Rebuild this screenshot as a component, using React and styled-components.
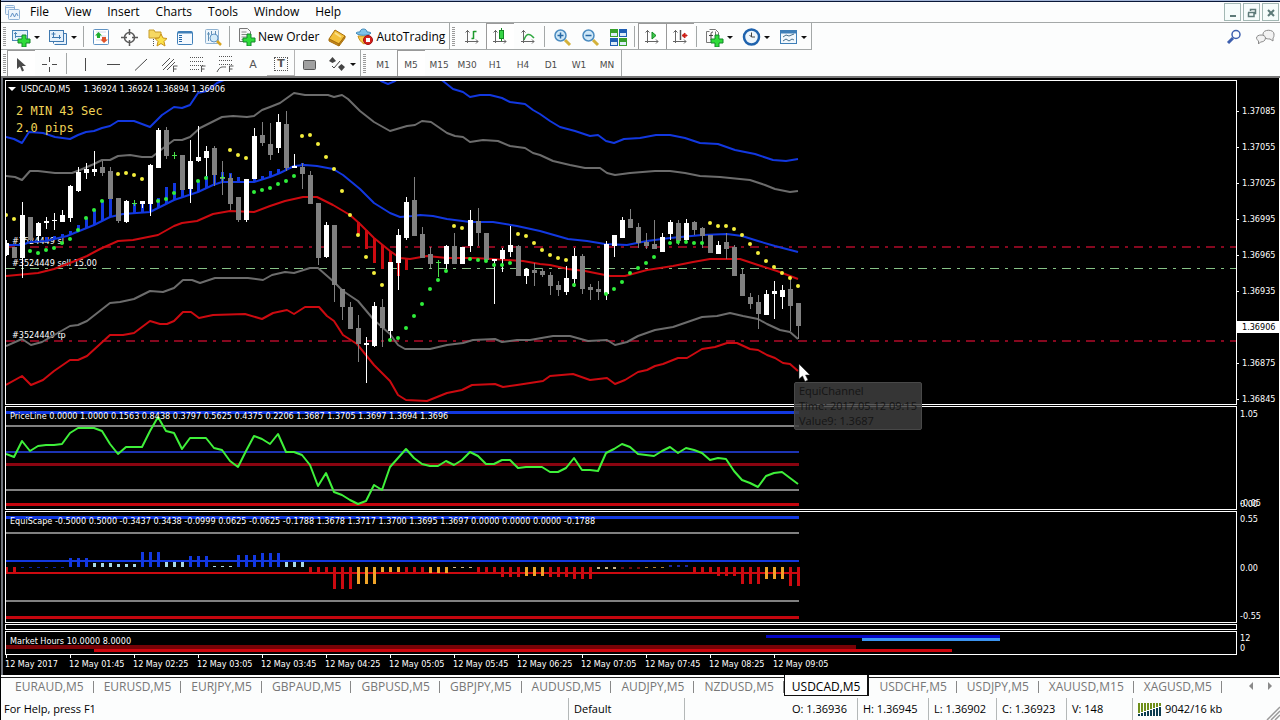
import styled, { createGlobalStyle, css } from "styled-components";

const STEP = 8;
const barX = (i) => 6 + i * STEP;

const BLUE = "#1238e0";
const RED = "#cc0a10";
const GRAY = "#6c6c6c";

// [index, high, open/close top, open/close bottom, low, up]
const candles = [
  [0, 240, 243, 255, 256, 1], [1, 247, 247, 258, 258, 0], [2, 202, 215, 258, 278, 1], [3, 217, 217, 240, 241, 0],
  [4, 222, 223, 236, 241, 1], [5, 217, 221, 223, 229, 1], [6, 213, 220, 221, 230, 1], [7, 210, 215, 222, 222, 1],
  [8, 185, 186, 218, 222, 1], [9, 167, 172, 191, 192, 1], [10, 163, 169, 173, 179, 1], [11, 151, 169, 172, 176, 1],
  [12, 161, 167, 173, 176, 0], [13, 167, 171, 199, 199, 0], [14, 198, 198, 221, 223, 0], [15, 200, 201, 222, 223, 1],
  [17, 201, 201, 204, 208, 1], [18, 164, 165, 204, 216, 1], [19, 128, 130, 168, 168, 1], [20, 127, 130, 156, 159, 0],
  [22, 155, 155, 190, 190, 0], [23, 140, 161, 189, 203, 1], [24, 126, 157, 161, 162, 1], [25, 146, 151, 158, 176, 1],
  [26, 146, 148, 175, 186, 0], [27, 161, 177, 179, 195, 0], [28, 174, 178, 204, 210, 0], [29, 197, 197, 220, 222, 0],
  [30, 179, 179, 220, 222, 1], [31, 128, 136, 179, 179, 1], [32, 122, 135, 143, 146, 0], [33, 123, 144, 155, 160, 0],
  [34, 114, 122, 148, 153, 1], [35, 111, 124, 168, 171, 0], [36, 154, 166, 168, 168, 1], [37, 163, 167, 174, 189, 0],
  [38, 171, 175, 204, 204, 0], [39, 203, 203, 258, 265, 0], [40, 222, 225, 257, 258, 1], [41, 225, 225, 285, 302, 0],
  [42, 289, 289, 307, 320, 0], [43, 302, 307, 329, 329, 0], [44, 315, 328, 344, 362, 0], [45, 337, 343, 345, 383, 1],
  [46, 302, 306, 346, 347, 1], [47, 299, 307, 328, 347, 0], [48, 262, 262, 331, 340, 1], [49, 229, 235, 263, 290, 1],
  [50, 197, 202, 238, 240, 1], [51, 177, 200, 236, 236, 0], [52, 227, 234, 258, 258, 0], [53, 247, 254, 264, 268, 0],
  [55, 245, 246, 264, 269, 1], [56, 233, 246, 264, 264, 0], [57, 247, 247, 264, 264, 1], [58, 210, 220, 246, 252, 1],
  [59, 208, 221, 233, 246, 0], [60, 233, 233, 260, 260, 0], [61, 259, 259, 261, 304, 1], [62, 248, 250, 259, 272, 1],
  [63, 226, 245, 252, 257, 1], [64, 245, 246, 276, 276, 0], [65, 268, 269, 276, 284, 1], [66, 263, 270, 273, 286, 0],
  [67, 268, 271, 275, 277, 0], [68, 272, 275, 286, 295, 0], [69, 281, 285, 290, 296, 0], [70, 266, 278, 292, 295, 1],
  [71, 248, 256, 279, 287, 1], [72, 254, 256, 289, 294, 0], [73, 284, 287, 290, 300, 0], [74, 281, 289, 292, 300, 0],
  [75, 241, 244, 294, 300, 1], [76, 235, 235, 246, 257, 1], [77, 217, 220, 238, 238, 1], [78, 209, 219, 228, 228, 0],
  [79, 223, 227, 243, 248, 0], [80, 233, 242, 246, 249, 0], [81, 220, 244, 249, 249, 0], [82, 233, 237, 252, 252, 1],
  [83, 220, 222, 234, 240, 1], [84, 220, 223, 241, 245, 0], [85, 219, 223, 240, 241, 1], [86, 221, 222, 230, 235, 0],
  [87, 227, 228, 236, 248, 0], [88, 235, 235, 253, 253, 0], [89, 241, 245, 254, 254, 1], [90, 233, 242, 249, 259, 0],
  [91, 245, 247, 276, 276, 0], [92, 269, 274, 296, 296, 0], [93, 293, 297, 304, 309, 0], [94, 295, 302, 314, 329, 0],
  [95, 290, 294, 315, 315, 1], [96, 281, 291, 294, 319, 1], [97, 285, 290, 297, 309, 1], [98, 279, 289, 306, 331, 0],
  [99, 303, 303, 326, 339, 0],
];

// [index, level, top, bottom]
const dojis = [[16, 203, 200, 206], [21, 155, 152, 159], [27, 177, 175, 180], [54, 262, 260, 277]];

const upperBlue = [
  [6, 137], [14, 139], [22, 143], [29, 132], [43, 133], [55, 137], [70, 139], [78, 135], [86, 132], [94, 131],
  [102, 128], [110, 126], [118, 121], [134, 121], [142, 124], [150, 127], [162, 115], [174, 107], [182, 108],
  [190, 105], [198, 93], [207, 91], [217, 83], [224, 80], [240, 70], [370, 70], [381, 81], [388, 84], [395, 81],
  [410, 70], [430, 72], [443, 81], [453, 89], [463, 92], [470, 97], [480, 95], [490, 95], [502, 98], [510, 102],
  [525, 104], [533, 110], [540, 114], [550, 121], [560, 127], [575, 131], [590, 136], [598, 135], [606, 141],
  [614, 143], [624, 139], [640, 138], [656, 135], [670, 135], [685, 138], [700, 143], [718, 144], [735, 150],
  [755, 154], [773, 160], [786, 161], [798, 159],
];
const upperGray = [
  [6, 176], [15, 177], [22, 180], [30, 171], [38, 171], [55, 173], [72, 173], [80, 170], [94, 164], [102, 160],
  [110, 160], [118, 156], [130, 155], [142, 157], [152, 157], [162, 149], [174, 140], [182, 140], [190, 137],
  [200, 128], [214, 121], [222, 117], [233, 116], [247, 117], [254, 116], [262, 110], [270, 107], [280, 103],
  [294, 93], [305, 95], [328, 95], [334, 97], [342, 95], [348, 99], [360, 111], [374, 122], [390, 131], [407, 126],
  [415, 125], [422, 121], [431, 122], [447, 133], [455, 136], [463, 137], [470, 142], [483, 140], [498, 141],
  [510, 146], [525, 148], [533, 153], [540, 155], [553, 161], [570, 165], [585, 168], [600, 168], [607, 173],
  [615, 175], [630, 173], [655, 171], [670, 171], [685, 173], [700, 176], [720, 177], [750, 180], [765, 185],
  [775, 189], [790, 192], [798, 191],
];
const midBlue = [
  [6, 245], [22, 245], [30, 242], [46, 241], [67, 236], [94, 225], [110, 217], [123, 214], [150, 212], [158, 208],
  [174, 200], [198, 192], [213, 185], [222, 182], [254, 182], [270, 177], [280, 173], [294, 166], [305, 165],
  [317, 166], [333, 169], [343, 175], [360, 189], [374, 203], [390, 213], [400, 217], [412, 216], [420, 215],
  [433, 216], [447, 219], [470, 222], [493, 222], [517, 226], [540, 231], [568, 239], [587, 241], [605, 244],
  [627, 245], [647, 241], [670, 238], [702, 235], [727, 234], [742, 236], [758, 241], [775, 246], [798, 252],
];
const midRed = [
  [6, 276], [38, 273], [54, 269], [70, 263], [87, 256], [100, 249], [118, 241], [133, 240], [158, 235], [174, 226],
  [182, 223], [197, 221], [213, 214], [230, 211], [254, 212], [270, 206], [285, 201], [303, 197], [317, 197],
  [333, 205], [350, 215], [360, 224], [374, 238], [390, 251], [400, 258], [410, 259], [427, 256], [447, 258],
  [473, 258], [493, 259], [523, 261], [540, 264], [550, 265], [568, 269], [585, 271], [600, 274], [610, 276],
  [625, 276], [647, 270], [673, 266], [693, 262], [710, 259], [740, 259], [758, 265], [777, 271], [798, 279],
];
const lowerGray = [
  [6, 346], [22, 339], [31, 345], [42, 342], [70, 326], [78, 325], [87, 321], [110, 303], [120, 302], [134, 299],
  [150, 291], [163, 292], [174, 288], [183, 280], [192, 280], [200, 283], [215, 278], [248, 278], [263, 280],
  [272, 275], [285, 272], [294, 273], [310, 268], [318, 268], [334, 282], [343, 291], [358, 301], [374, 320],
  [390, 334], [398, 345], [405, 349], [430, 349], [447, 345], [463, 343], [473, 340], [495, 339], [502, 342],
  [517, 340], [530, 340], [553, 336], [570, 336], [588, 341], [607, 340], [615, 345], [627, 342], [638, 336],
  [655, 330], [673, 327], [702, 317], [717, 316], [730, 313], [743, 316], [758, 319], [767, 324], [780, 330],
  [790, 332], [798, 339],
];
const lowerRed = [
  [6, 385], [22, 376], [31, 385], [43, 380], [54, 371], [70, 360], [78, 360], [87, 356], [110, 335], [123, 335],
  [134, 333], [150, 321], [160, 324], [167, 324], [174, 321], [183, 312], [191, 312], [199, 318], [213, 315],
  [245, 314], [262, 319], [273, 313], [287, 310], [294, 314], [305, 307], [319, 307], [327, 316], [334, 321],
  [343, 335], [357, 344], [374, 365], [390, 381], [398, 395], [406, 400], [427, 401], [447, 393], [462, 390],
  [472, 385], [495, 384], [503, 387], [517, 385], [530, 383], [543, 381], [550, 376], [573, 374], [590, 380],
  [607, 378], [615, 384], [625, 380], [638, 372], [647, 370], [655, 366], [663, 364], [678, 358], [687, 358],
  [702, 349], [715, 347], [727, 343], [737, 343], [750, 349], [758, 350], [767, 355], [775, 358], [783, 363],
  [790, 364], [798, 371],
];

const blueSpikes = [
  [5, 237], [6, 236], [7, 234], [8, 231], [9, 225], [10, 218], [11, 210], [12, 201], [13, 199], [15, 204], [16, 204],
  [17, 204], [18, 204], [19, 198], [20, 187], [21, 183], [22, 186], [23, 186], [24, 181], [25, 176], [26, 174],
  [27, 172], [28, 173], [29, 177], [31, 179], [32, 176], [33, 171], [34, 169], [35, 168], [37, 163],
];
const redSpikes = [[44, 234], [45, 249], [46, 263], [47, 269], [48, 274], [49, 276], [50, 270]];

const yellowDots = [
  [0, 215], [1, 219], [14, 174], [15, 173], [16, 175], [17, 179], [28, 150], [29, 155], [30, 158], [37, 136],
  [38, 135], [39, 144], [40, 157], [41, 169], [42, 191], [43, 215], [44, 235], [45, 257], [46, 273], [47, 285],
  [56, 226], [57, 228], [64, 234], [65, 236], [66, 243], [67, 250], [68, 255], [69, 258], [70, 260], [88, 223],
  [89, 226], [90, 226], [91, 229], [92, 235], [93, 244], [94, 253], [95, 261], [96, 267], [97, 273], [98, 278],
  [99, 286],
];
const greenDots = [
  [3, 251], [4, 253], [5, 250], [6, 248], [7, 243], [8, 239], [9, 230], [10, 218], [11, 210], [12, 201], [19, 201],
  [20, 199], [21, 193], [24, 181], [25, 178], [31, 192], [32, 190], [33, 188], [34, 184], [35, 181], [36, 176],
  [48, 340], [49, 338], [50, 328], [51, 316], [52, 304], [53, 289], [54, 280], [55, 271], [58, 259], [59, 260],
  [60, 261], [61, 265], [62, 265], [63, 263], [71, 285], [75, 294], [76, 289], [77, 282], [78, 273], [79, 268],
  [80, 263], [81, 257], [83, 243], [84, 242], [85, 242], [86, 243], [87, 243],
];

const priceLine = [
  454, 457, 441, 451, 446, 445, 445, 444, 433, 428, 428, 428, 431, 444, 454, 447, 447, 447, 431, 417, 431, 433, 449,
  438, 438, 438, 448, 450, 461, 467, 451, 436, 439, 444, 434, 452, 452, 455, 465, 486, 473, 492, 495, 500, 504, 501,
  485, 490, 467, 458, 449, 458, 464, 466, 466, 461, 465, 460, 452, 456, 464, 464, 460, 460, 468, 467, 467, 467, 472,
  472, 468, 458, 470, 470, 471, 453, 449, 444, 447, 454, 455, 456, 451, 447, 453, 448, 450, 453, 460, 458, 459, 471,
  480, 483, 487, 476, 473, 472, 478, 484,
];

// [from, to, top, bottom, colour]
const scapeBars = [
  [0, 1, 567, 573, RED], [2, 7, 567, 568, "#0a22a0"], [8, 10, 558, 567, BLUE], [11, 13, 563, 567, "#a9d8e6"],
  [14, 16, 564, 567, "#a9d8e6"], [17, 19, 552, 567, BLUE], [20, 22, 562, 567, "#a9d8e6"], [23, 25, 556, 567, BLUE],
  [26, 28, 566, 567, "#a9d8e6"], [29, 31, 555, 567, BLUE], [32, 34, 553, 567, BLUE], [35, 37, 562, 567, "#a9d8e6"],
  [38, 40, 567, 573, RED], [41, 43, 567, 589, RED], [44, 46, 567, 584, "#f0a428"], [47, 49, 567, 572, "#f0a428"],
  [50, 52, 567, 573, RED], [53, 55, 567, 573, "#f0a428"], [56, 58, 567, 568, "#d8b888"], [59, 61, 567, 573, RED],
  [62, 64, 567, 577, RED], [65, 67, 567, 576, "#f0a428"], [68, 70, 567, 577, RED], [71, 73, 567, 579, RED],
  [74, 76, 567, 569, "#c8b088"], [77, 79, 567, 569, "#700a10"], [80, 82, 567, 568, "#b08030"],
  [83, 85, 565, 567, "#1a26a0"], [86, 88, 567, 573, RED], [89, 91, 567, 576, RED], [92, 94, 567, 584, RED],
  [95, 97, 567, 579, "#f0a428"], [98, 99, 567, 586, RED],
];

const toPoints = (list) => list.map((p) => p.join(",")).join(" ");

const valueAt = (list, x) => {
  const next = list.findIndex((p) => p[0] >= x);
  if (next <= 0) return list[0][1];
  const [x0, y0] = list[next - 1];
  const [x1, y1] = list[next];
  return Math.round(y0 + ((y1 - y0) * (x - x0)) / (x1 - x0));
};

const menus = ["File", "View", "Insert", "Charts", "Tools", "Window", "Help"];
const frames = ["M1", "M5", "M15", "M30", "H1", "H4", "D1", "W1", "MN"];
const prices = ["1.37085", "1.37055", "1.37025", "1.36995", "1.36965", "1.36935", "1.36906", "1.36875", "1.36845"];
const times = [
  "12 May 2017", "12 May 01:45", "12 May 02:25", "12 May 03:05", "12 May 03:45", "12 May 04:25", "12 May 05:05",
  "12 May 05:45", "12 May 06:25", "12 May 07:05", "12 May 07:45", "12 May 08:25", "12 May 09:05",
];
const symbols = [
  "EURAUD,M5", "EURUSD,M5", "EURJPY,M5", "GBPAUD,M5", "GBPUSD,M5", "GBPJPY,M5", "AUDUSD,M5", "AUDJPY,M5", "NZDUSD,M5",
  "USDCAD,M5", "USDCHF,M5", "USDJPY,M5", "XAUUSD,M15", "XAGUSD,M5",
];

const plus = <path d="M10 7h4v4h4v4h-4v4h-4v-4H6v-4h4z" fill="#2fdc3a" stroke="#12862a" />;
const axes = <path d="M4.5 2v13M2.5 4.5l2-2 2 2M2 13.500h13M13 11.500l2 2-2 2" fill="none" stroke="#666" />;
const smallF = <path d="M13.500 17v-6h4M13.500 14h3" fill="none" stroke="#555" />;

const icons = {
  app: (
    <g fill="#eef5fc" stroke="#8fb2d6">
      <rect x="2.500" y="2.500" width="9" height="9" rx="1" />
      <path d="M2.500 4.500h9" />
      <rect x="5.500" y="6.500" width="11" height="10" rx="1" />
      <path d="M7.500 14l2-4 2 4 2-4 1.500 3" fill="none" stroke="#5f8fc4" />
    </g>
  ),
  newChart: (
    <g>
      <rect x="0.500" y="2.500" width="15" height="10" fill="#e6f1fb" stroke="#4d86b8" />
      <path d="M3.500 4v6M2 5.500h3M3 8.500h9M10.500 7v3" fill="none" stroke="#4d86b8" />
      {plus}
    </g>
  ),
  profiles: (
    <g fill="#e6f1fb" stroke="#3f79b0">
      <path d="M5.500 16.500h12v-11h-3M4.500 13.500v2" />
      <rect x="0.500" y="2.500" width="14" height="11" />
      <path d="M4.500 4v6M2.500 6h4M3 9.500h9M10.500 7v4" fill="none" />
    </g>
  ),
  market: (
    <g>
      <rect x="1.500" y="1.500" width="15" height="15" rx="1" fill="#fff" stroke="#5f93c4" />
      <path d="M4 4h10M4 8h10M4 12h10" stroke="#d0dcea" />
      <path d="M6.500 4l3.500 3.500H8V10H5V7.500H3z" fill="#1fae2f" />
      <path d="M12 15l-3.500-3.500H10V9h4v2.500h2z" fill="#e0532a" />
    </g>
  ),
  crosshair: (
    <g fill="none" stroke="#5a5a5a" strokeWidth="1.500">
      <circle cx="9.500" cy="9.500" r="5" />
      <path d="M9.500 1v6M9.500 12v6M1 9.500h6M12 9.500h6" />
    </g>
  ),
  favorites: (
    <g>
      <path d="M1 2h5l1 2h6v6H1z" fill="#f6d862" stroke="#c79d2a" />
      <path d="M5.500 11v7" stroke="#555" strokeDasharray="1 1" />
      <path d="M13 6l2 4 4 .5-3 3 1 4.500-4-2.500L9 18l1-4.500-3-3 4-.5z" fill="#fbe24a" stroke="#c9921a" />
    </g>
  ),
  navigator: (
    <g>
      <rect x="1.500" y="3.500" width="15" height="13" rx="1" fill="#f4f9fe" stroke="#3e7fb8" />
      <path d="M2 4.500h14" stroke="#3e7fb8" strokeWidth="2" />
      <path d="M4.500 7v8" stroke="#2465a4" strokeDasharray="1 1" strokeWidth="3" />
    </g>
  ),
  tester: (
    <g>
      <rect x="1.500" y="1.500" width="13" height="14" rx="1" fill="#edf5fb" stroke="#8fb2d0" />
      <path d="M4.500 4v9M7.500 3v6M11.500 3v5M3 6h3" fill="none" stroke="#5f8fb5" />
      <circle cx="10" cy="10" r="4" fill="#d3ebf8" stroke="#5f93c4" />
      <path d="M13 13l4 4" stroke="#d9a520" strokeWidth="2.500" />
    </g>
  ),
  order: (
    <g>
      <path d="M2.500 1.500h8l3 3v10h-11z" fill="#f7f7f7" stroke="#777" />
      <path d="M4.500 5h5M4.500 7.500h7M4.500 10h7M4.500 12.500h3" stroke="#888" />
      {plus}
    </g>
  ),
  gold: (
    <g stroke="#a8700e">
      <path d="M1 11l6-9 10 6-6 8z" fill="#f3c03a" />
      <path d="M1 11l10 5v2L1 13zM11 16l6-8v2l-6 8z" fill="#c98a1a" />
      <path d="M7 5l6 4" stroke="#fbe08a" strokeWidth="2" />
    </g>
  ),
  auto: (
    <g>
      <path d="M3 9c1 4 3 6 6 8 3-2 5-4 5-8z" fill="#f6c648" stroke="#c9921a" />
      <path d="M1 6c2 3 13 3 15 0-1-1-3-1-4-1 0-4-7-4-7 0-2 0-3 0-4 1z" fill="#7ec3e8" stroke="#3f88b8" />
      <circle cx="13" cy="13" r="4.500" fill="#d4201c" stroke="#a01010" />
      <rect x="11" y="11" width="4" height="4" fill="#fff" />
    </g>
  ),
  bars: <g>{axes}<path d="M10.500 3v8M8.500 10.500h2M10.500 3.500h3" fill="none" stroke="#1c9a2c" strokeWidth="1.500" /></g>,
  candles: (
    <g>
      {axes}
      <path d="M10.500 0v13" stroke="#128a22" />
      <rect x="8.500" y="2.500" width="4" height="8" fill="#35d445" stroke="#128a22" />
    </g>
  ),
  line: <g>{axes}<path d="M5 12c2-6 5-8 10-2" fill="none" stroke="#2fa840" strokeWidth="1.500" /></g>,
  zoomIn: (
    <g>
      <path d="M12 12l5 5" stroke="#d3b13a" strokeWidth="3" />
      <circle cx="7.500" cy="7.500" r="5.500" fill="#cfe8f8" stroke="#4b8cc0" strokeWidth="1.500" />
      <path d="M7.500 4.500v6M4.500 7.500h6" stroke="#2668a4" strokeWidth="1.500" />
    </g>
  ),
  zoomOut: (
    <g>
      <path d="M12 12l5 5" stroke="#d3b13a" strokeWidth="3" />
      <circle cx="7.500" cy="7.500" r="5.500" fill="#cfe8f8" stroke="#4b8cc0" strokeWidth="1.500" />
      <path d="M4.500 7.500h6" stroke="#2668a4" strokeWidth="1.500" />
    </g>
  ),
  tile: (
    <g>
      <path d="M1 1h8v8H1zM10 10h8v8h-8z" fill="#36a02c" />
      <path d="M10 1h8v8h-8zM1 10h8v8H1z" fill="#1f5fb4" />
      <path d="M2 5h6v3H2zM11 5h6v3h-6zM2 14h6v3H2zM11 14h6v3h-6z" fill="#dcecf8" />
    </g>
  ),
  scroll: <g>{axes}<path d="M9 4v7l4-3.500z" fill="#3fcb4c" stroke="#128a22" /></g>,
  shift: (
    <g>
      {axes}
      <path d="M9.500 2v10" stroke="#555" strokeWidth="1.500" />
      <path d="M11 7.500l3-2.500v2h2v1h-2v2z" fill="#cc2018" stroke="#cc2018" />
    </g>
  ),
  indicators: (
    <g>
      <path d="M4.500 3.500h-3v11h9v-11M4.500 1.500h6l3 3v7" fill="#fafafa" stroke="#777" />
      <path d="M8 4c-2 0-2 1-2 3v5M4 7.500h4" fill="none" stroke="#444" />
      {plus}
    </g>
  ),
  clock: (
    <g>
      <circle cx="9.500" cy="9" r="7.500" fill="#eef6fc" stroke="#1f63ae" strokeWidth="2.500" />
      <path d="M9.500 4.500V9H13M9.500 9l-2-2" fill="none" stroke="#444" />
    </g>
  ),
  template: (
    <g>
      <rect x="1.500" y="2.500" width="16" height="13" fill="#f1f8fd" stroke="#3e7fb8" />
      <path d="M2 4h15" stroke="#3e7fb8" strokeWidth="3" />
      <path d="M4 9l3-2 3 1 5-2M4 13l3-2 3 2 3-2 2 1" fill="none" stroke="#49708c" />
    </g>
  ),
  pointer: <path d="M5 3v11l3-2.500 2 5 2-1-2-4.500h4z" fill="#4a4a4a" />,
  cross: <path d="M9.500 2v5M9.500 12v5M2 9.500h5M12 9.500h5" stroke="#4a4a4a" />,
  vline: <path d="M9.500 3v13" stroke="#4a4a4a" />,
  hline: <path d="M3 9.500h13" stroke="#4a4a4a" />,
  trend: <path d="M3 15.500L15 4" stroke="#4a4a4a" />,
  channel: <g><path d="M2 11l8-8M3 15L14 4M7 15l8-8" stroke="#555" />{smallF}</g>,
  fibo: <g><path d="M2 2.500h14M2 6.500h14M2 10.500h14M2 14.500h9" stroke="#555" strokeDasharray="1 1" />{smallF}</g>,
  fan: (
    <g>
      <path d="M3 1.500h14M3 5.500h14M3 9.500h14" stroke="#555" strokeDasharray="1 1" />
      <path d="M1 17c3-6 5-5 9-5" fill="none" stroke="#555" />
      {smallF}
    </g>
  ),
  shape: <rect x="3.500" y="5.500" width="12" height="9" rx="1" fill="#a0a0a0" stroke="#555" />,
  arrows: (
    <g fill="#444">
      <path d="M1 6l3.500-4L8 6 4.500 8zM10 12l3.500-3 3.500 3-3.500 4z" />
      <path d="M4 11l2 2 6-7" fill="none" stroke="#444" />
    </g>
  ),
  search: (
    <g fill="none" stroke="#3d5fae">
      <circle cx="11" cy="6.500" r="4" strokeWidth="1.500" />
      <path d="M8 10l-5 5" strokeWidth="3" />
    </g>
  ),
  chat: (
    <g fill="#f2f2f2" stroke="#8a8a8a">
      <path d="M7 6c0-5 11-5 11 0 0 2 0 3-1 4v3l-3-2c-4 0-7-1-7-5z" />
      <path d="M0.500 10c0-4 9-4 9 0 0 3-3 4-5 4l-2 2v-3c-1-1-2-2-2-3z" />
    </g>
  ),
};

const Icon = ({ name }) => (
  <Glyph viewBox="0 0 19 19" aria-hidden="true">
    {icons[name]}
  </Glyph>
);

const Tool = ({ icon, label, drop, pressed, children }) => (
  <ToolButton type="button" aria-label={label} $drop={drop} $pressed={pressed} $text={Boolean(children)}>
    {icon && <Icon name={icon} />}
    {children}
    {drop && <Caret />}
  </ToolButton>
);

const Trail = ({ points, color }) => (
  <polyline points={toPoints(points)} fill="none" stroke={color} strokeWidth="2" strokeLinejoin="round" />
);

const Level = ({ y, color, size = 2, from = 6, to = 799 }) => (
  <rect x={from} y={y} width={to - from} height={size} fill={color} />
);

const OrderLine = ({ y, color, size = 1, label }) => (
  <>
    <line
      x1="6"
      x2="110%"
      y1={y + size / 2}
      y2={y + size / 2}
      stroke={color}
      strokeWidth={size}
      strokeDasharray="9 6 3 6"
    />
    <OrderText x="12" y={y - 2}>{label}</OrderText>
  </>
);

const PriceChart = () => (
  <Canvas>
    <svg x="-6" y="-81" width="100%" height="500" overflow="visible">
      <OrderLine y={246} size={2} color="#86081f" label="#3524449 sl" />
      <OrderLine y={268} color="#86c286" label="#3524449 sell 15.00" />
      <OrderLine y={340} size={2} color="#86081f" label="#3524449 tp" />
      <Trail points={upperBlue} color={BLUE} />
      <Trail points={upperGray} color={GRAY} />
      <Trail points={lowerGray} color={GRAY} />
      <Trail points={lowerRed} color={RED} />
      {blueSpikes.map(([i, y]) => (
        <rect key={i} x={barX(i) - 1} y={y} width="3" height={Math.max(2, valueAt(midBlue, barX(i)) - y)} fill={BLUE} />
      ))}
      {redSpikes.map(([i, y]) => {
        const top = valueAt(midRed, barX(i));
        return <rect key={i} x={barX(i) - 1} y={top} width="3" height={Math.max(2, y - top)} fill={RED} />;
      })}
      <Trail points={midBlue} color={BLUE} />
      <Trail points={midRed} color={RED} />
      {candles.map(([i, high, top, bottom, low, up]) => (
        <g key={i} fill={up ? "#fff" : "#808080"}>
          <rect x={barX(i)} y={high} width="1" height={low - high} />
          <rect x={barX(i) - 2} y={top} width="5" height={bottom - top} />
        </g>
      ))}
      {dojis.map(([i, level, top, bottom]) => (
        <path key={i} d={`M${barX(i) - 2} ${level + 0.5}h5M${barX(i) + 0.5} ${top}V${bottom}`} stroke="#4be04b" />
      ))}
      {yellowDots.map(([i, y]) => <circle key={i} cx={barX(i)} cy={y} r="2" fill="#f4ee3c" />)}
      {greenDots.map(([i, y]) => <circle key={i} cx={barX(i)} cy={y} r="2" fill="#2fee3a" />)}
    </svg>
  </Canvas>
);

const PriceLineChart = () => (
  <Canvas>
    <g transform="translate(-6 -407)">
      <Level y={411} size={3} color={BLUE} />
      <Level y={425} color="#808080" />
      <Level y={451} color="#1c34b4" />
      <Level y={463} size={3} color="#8a0410" />
      <Level y={489} color="#808080" />
      <Level y={503} size={3} color="#c4060e" />
      <polyline
        points={priceLine.map((y, i) => `${barX(i)},${y}`).join(" ")}
        fill="none"
        stroke="#3ff03a"
        strokeWidth="2"
        strokeLinejoin="round"
      />
    </g>
  </Canvas>
);

const ScapeChart = () => (
  <Canvas>
    <g transform="translate(-6 -512)">
      <Level y={516} size={3} color={BLUE} />
      <Level y={532} color="#808080" />
      <Level y={560} color={BLUE} />
      <Level y={572} color={RED} />
      <Level y={600} color="#808080" />
      <Level y={616} size={3} color="#c4060e" />
      {scapeBars.map(([from, to, top, bottom, color]) =>
        Array.from({ length: to - from + 1 }, (_, n) => (
          <rect key={from + n} x={barX(from + n) - 1} y={top} width="3" height={bottom - top} fill={color} />
        ))
      )}
    </g>
  </Canvas>
);

const HoursChart = () => (
  <Canvas>
    <g transform="translate(-6 -632)">
      <Level y={645} size={4} to={856} color="#780206" />
      <Level y={649} size={3} from={94} to={952} color="#d0060e" />
      <Level y={635} size={3} from={766} to={1000} color="#0404c4" />
      <Level y={638} size={3} from={862} to={1000} color="#3c94f0" />
    </g>
  </Canvas>
);

const App = () => {
  return (
    <Window>
      <GlobalStyle />
      <Strip />
      <MenuBar>
        <Icon name="app" />
        <Menus>
          {menus.map((m) => (
            <MenuItem type="button" key={m}>{m}</MenuItem>
          ))}
        </Menus>
        <WindowButtons>
          <WindowButton type="button" aria-label="Minimize">
            <svg width="15" height="15"><path d="M5 11h6" stroke="#5d7a78" strokeWidth="2" /></svg>
          </WindowButton>
          <WindowButton type="button" aria-label="Restore">
            <svg width="15" height="15">
              <path d="M6.500 6V4.500h5v4H10M4 7.500h6v4H4.500v-4" fill="none" stroke="#5d7a78" strokeWidth="1.500" />
            </svg>
          </WindowButton>
          <WindowButton type="button" aria-label="Close">
            <svg width="15" height="15"><path d="M5 5l6 6M11 5l-6 6" stroke="#5d7a78" strokeWidth="2" /></svg>
          </WindowButton>
        </WindowButtons>
      </MenuBar>

      <ToolRow>
        <ToolGroup $line>
          <Grip />
          <Tool icon="newChart" label="New chart" drop />
          <Tool icon="profiles" label="Profiles" drop />
          <Divider />
          <Tool icon="market" label="Market Watch" />
          <Tool icon="crosshair" label="Data Window" />
          <Tool icon="favorites" label="Navigator" />
          <Tool icon="navigator" label="Terminal" />
          <Tool icon="tester" label="Strategy Tester" />
          <Divider />
          <Tool icon="order">New Order</Tool>
          <Tool icon="gold" label="MetaEditor" />
          <Tool icon="auto">AutoTrading</Tool>
        </ToolGroup>
        <ToolGroup $line>
          <Grip $wide />
          <Tool icon="bars" label="Bar chart" />
          <Tool icon="candles" label="Candlesticks" pressed />
          <Tool icon="line" label="Line chart" />
          <Divider />
          <Tool icon="zoomIn" label="Zoom in" />
          <Tool icon="zoomOut" label="Zoom out" />
          <Tool icon="tile" label="Tile windows" />
          <Divider />
          <Tool icon="scroll" label="Auto scroll" pressed />
          <Tool icon="shift" label="Chart shift" pressed />
          <Divider />
          <Tool icon="indicators" label="Indicators" drop />
          <Tool icon="clock" label="Periods" drop />
          <Tool icon="template" label="Templates" drop />
        </ToolGroup>
        <RightTools>
          <Tool icon="search" label="Search" />
          <Tool icon="chat" label="Chat" />
        </RightTools>
      </ToolRow>

      <ToolRow $last>
        <ToolGroup>
          <Grip />
          <Tool icon="pointer" label="Cursor" pressed />
          <Tool icon="cross" label="Crosshair" />
          <Divider $wide />
          <Tool icon="vline" label="Vertical line" />
          <Tool icon="hline" label="Horizontal line" />
          <Tool icon="trend" label="Trendline" />
          <Tool icon="channel" label="Channel" />
          <Tool icon="fibo" label="Fibonacci" />
          <Tool icon="fan" label="Fan" />
          <TextTool type="button">A</TextTool>
          <TextTool type="button" $boxed><span>T</span></TextTool>
          <Tool icon="shape" label="Shapes" />
          <Tool icon="arrows" label="Arrows" drop />
        </ToolGroup>
        <ToolGroup>
          <Grip $wide />
          {frames.map((f) => (
            <FrameButton type="button" key={f} $pressed={f === "M5"}>{f}</FrameButton>
          ))}
        </ToolGroup>
      </ToolRow>

      <Workspace>
        <Pane $height={325}>
          <Plot>
            <PriceChart />
            <PaneTitle $main>
              <Triangle />
              <span>USDCAD,M5</span>
              <Quote>1.36924 1.36924 1.36894 1.36906</Quote>
            </PaneTitle>
            <Countdown>
              2 MIN 43 Sec
              <br />
              2.0 pips
            </Countdown>
            <Tooltip>
              EquiChannel
              <br />
              Time: 2017.05.12 09:15
              <br />
              Value9: 1.3687
            </Tooltip>
            <Cursor viewBox="0 0 12 19">
              <path d="M1 1v15l3.500-3 2.500 5.500 3-1.500-2.500-5H12z" fill="#fff" stroke="#222" strokeWidth="0.500" />
            </Cursor>
          </Plot>
          <PriceScale>
            {prices.map((p) => (
              <Price key={p} $current={p === "1.36906"}>{p}</Price>
            ))}
          </PriceScale>
        </Pane>
        <Pane $height={104}>
          <Plot>
            <PriceLineChart />
            <PaneTitle>
              PriceLine 0.0000 1.0000 0.1563 0.8438 0.3797 0.5625 0.4375 0.2206 1.3687 1.3705 1.3697 1.3694 1.3696
            </PaneTitle>
          </Plot>
          <Scale>
            <span>1.05</span>
            <span>-0.05</span>
            <ZeroMark>0.00</ZeroMark>
          </Scale>
        </Pane>
        <Pane $height={112}>
          <Plot>
            <ScapeChart />
            <PaneTitle>
              EquiScape -0.5000 0.5000 -0.3437 0.3438 -0.0999 0.0625 -0.0625 -0.1788 1.3678 1.3717 1.3700 1.3695 1.3697
              0.0000 0.0000 0.0000 -0.1788
            </PaneTitle>
          </Plot>
          <Scale>
            <span>0.55</span>
            <span>0.00</span>
            <span>-0.55</span>
          </Scale>
        </Pane>
        <Pane $height={6}>
          <Plot />
        </Pane>
        <Pane $height={24}>
          <Plot>
            <HoursChart />
            <PaneTitle>Market Hours 10.0000 8.0000</PaneTitle>
          </Plot>
          <Scale $tight>
            <span>12</span>
            <span>0</span>
          </Scale>
        </Pane>
        <TimeScale>
          {times.map((t) => (
            <Time key={t}>{t}</Time>
          ))}
        </TimeScale>
      </Workspace>

      <Tabs>
        {symbols.map((s) => (
          <Tab type="button" key={s} $active={s === "USDCAD,M5"}>{s}</Tab>
        ))}
        <TabArrows>
          <ArrowButton type="button" aria-label="Scroll left">
            <svg width="4" height="8"><path d="M4 0v8L0 4z" fill="#8a8a8a" /></svg>
          </ArrowButton>
          <ArrowButton type="button" aria-label="Scroll right">
            <svg width="4" height="8"><path d="M0 0v8l4-4z" fill="#8a8a8a" /></svg>
          </ArrowButton>
        </TabArrows>
      </Tabs>

      <StatusBar>
        <HelpText>For Help, press F1</HelpText>
        <Cell $width={116}>Default</Cell>
        <Cell $width={102} />
        <Cell $width={71} $plain>O: 1.36936</Cell>
        <Cell $width={71}>H: 1.36945</Cell>
        <Cell $width={68}>L: 1.36902</Cell>
        <Cell $width={70}>C: 1.36923</Cell>
        <Cell $width={66}>V: 148</Cell>
        <Cell $width={148}>
          <svg width="23" height="13">
            {[0, 3, 6, 9, 12, 15, 18, 21].map((x, i) => (
              <g key={x}>
                <rect x={x} y="0" width="2" height={10 - i} fill="#6f8f1a" />
                <rect x={x} y={11 - i} width="2" height={2 + i} fill="#0c3c50" />
              </g>
            ))}
          </svg>
          9042/16 kb
          <SizeGrip width="14" height="14">
            <path d="M1 14L14 1M5 14l9-9M9 14l5-5" stroke="#9a9a9a" strokeWidth="1.500" />
          </SizeGrip>
        </Cell>
      </StatusBar>
    </Window>
  );
};

const GlobalStyle = createGlobalStyle`
  * {
    box-sizing: border-box;
  }
  body {
    margin: 0;
    background: #fcfdfd;
    color: #000;
    font-family: "Open Sans", "Noto Sans", sans-serif;
    font-size: 12px;
  }
  button {
    margin: 0;
    padding: 0;
    border: 0;
    background: none;
    color: inherit;
    font: inherit;
  }
`;

const Window = styled.div`
  display: flex;
  flex-direction: column;
  min-height: 100vh;
  border-left: 1px solid #000;
`;

const Strip = styled.div`
  height: 2px;
  background: #a4b6d8;
  border-bottom: 1px solid #0a1838;
`;

const MenuBar = styled.header`
  display: flex;
  align-items: center;
  height: 21px;
  padding-left: 2px;
  border-bottom: 1px solid #a4a8a8;
`;

const Menus = styled.nav`
  display: flex;
  flex: 1;
`;

const MenuItem = styled.button`
  padding: 0 8px;
  line-height: 18px;

  &:hover {
    background: #dce8f4;
  }
`;

const WindowButtons = styled.div`
  display: flex;
  gap: 2px;
  padding-right: 1px;
`;

const WindowButton = styled.button`
  display: flex;
  align-items: center;
  justify-content: center;
  width: 17px;
  height: 18px;
  border: 1px solid #a3b8b4;
  background: #f6fcfb;
`;

const Glyph = styled.svg`
  flex: none;
  width: 19px;
  height: 19px;
`;

const ToolRow = styled.div`
  display: flex;
  height: ${(p) => (p.$last ? "28px" : "27px")};
  border-bottom: ${(p) => (p.$last ? "2px solid #777" : "0")};
`;

const ToolGroup = styled.div`
  display: flex;
  align-items: stretch;
  border-right: 1px solid #a4a8a8;
  border-bottom: ${(p) => (p.$line ? "1px solid #a4a8a8" : "0")};
`;

const RightTools = styled.div`
  display: flex;
  gap: 3px;
  margin-left: auto;
  padding-right: 1px;
`;

const Grip = styled.div`
  width: 3px;
  margin: 4px ${(p) => (p.$wide ? "3px" : "1px")} 3px 2px;
  background: repeating-linear-gradient(#9a9a9a 0 1px, #fcfdfd 1px 2px);
`;

const Divider = styled.div`
  width: 1px;
  margin: 3px ${(p) => (p.$wide ? "4px" : "3px")} 2px ${(p) => (p.$wide ? "3px" : "2px")};
  background: #a4a8a8;
`;

const pressedLook = css`
  background: #fff;
  box-shadow: inset 2px 2px 0 -1px #9a9a9a;
`;

const ToolButton = styled.button`
  display: flex;
  align-items: center;
  justify-content: center;
  gap: ${(p) => (p.$text ? "2px" : "3px")};
  flex: none;
  width: ${(p) => (p.$text ? "auto" : p.$drop ? "37px" : "28px")};
  padding: ${(p) => (p.$text ? "0 4px" : "2px 0 0")};
  ${(p) => p.$pressed && pressedLook}
`;

const Caret = styled.span`
  border: 3px solid transparent;
  border-top-color: #111;
  border-bottom: 0;
`;

const TextTool = styled.button`
  width: 28px;
  padding-top: 2px;
  color: #555;
  font-family: "DejaVu Sans", sans-serif;
  font-size: 11px;
  ${(p) =>
    p.$boxed &&
    css`
      box-shadow: inset -2px -2px 0 -1px #b4b4b4;
      font-weight: bold;

      span {
        display: inline-block;
        width: 14px;
        border: 1px dotted #555;
        line-height: 12px;
      }
    `}
`;

const FrameButton = styled.button`
  width: 28px;
  padding-top: 3px;
  color: #4c4c4c;
  font-family: "DejaVu Sans", sans-serif;
  font-size: 9px;
  ${(p) => p.$pressed && pressedLook}
`;

const Workspace = styled.main`
  display: flex;
  flex: 1;
  flex-direction: column;
  gap: 1px;
  padding: 2px 0 0 2px;
  border-left: 2px solid #70747c;
  border-right: 1px solid #fff;
  background: #000;
  color: #fff;
  font-family: "DejaVu Sans Condensed", "DejaVu Sans", sans-serif;
  font-size: 9px;
`;

const Pane = styled.section`
  display: grid;
  grid-template-columns: minmax(0, 1fr) 42px;
  grid-template-rows: minmax(0, 1fr);
  height: ${(p) => p.$height}px;
`;

const Plot = styled.div`
  position: relative;
  min-height: 0;
  border: 1px solid #fff;
`;

const Canvas = styled.svg`
  display: block;
  width: 100%;
  height: 100%;
`;

const OrderText = styled.text`
  fill: #fff;
`;

const PaneTitle = styled.h2`
  position: absolute;
  top: ${(p) => (p.$main ? "2px" : "3px")};
  left: 4px;
  display: flex;
  align-items: center;
  gap: 5px;
  margin: 0;
  font-size: 9px;
  font-weight: normal;
  line-height: 12px;
  white-space: nowrap;
`;

const Triangle = styled.span`
  margin-left: -2px;
  border: 4px solid transparent;
  border-top-color: #fff;
  border-bottom: 0;
`;

const Quote = styled.span`
  padding-left: 8px;
`;

const Countdown = styled.p`
  position: absolute;
  top: 22px;
  left: 10px;
  margin: 0;
  color: #f0d456;
  font-family: "DejaVu Sans Mono", monospace;
  font-size: 12px;
  line-height: 17px;
`;

const Tooltip = styled.div`
  position: absolute;
  z-index: 1;
  top: 301px;
  left: 788px;
  padding: 0 4px 1px;
  border: 1px solid #484848;
  border-radius: 2px;
  background: rgba(62, 62, 62, 0.85);
  color: #141414;
  font-family: "Open Sans", sans-serif;
  font-size: 11px;
  line-height: 15px;
  white-space: nowrap;
`;

const Cursor = styled.svg`
  position: absolute;
  z-index: 2;
  top: 282px;
  left: 792px;
  width: 12px;
  height: 19px;
`;

const PriceScale = styled.div`
  display: flex;
  flex-direction: column;
  justify-content: space-between;
  padding-top: 25px;
`;

const Price = styled.span`
  display: flex;
  align-items: center;
  gap: 3px;
  line-height: 12px;
  background: ${(p) => (p.$current ? "#fff" : "transparent")};
  color: ${(p) => (p.$current ? "#000" : "#fff")};

  &::before {
    content: "";
    width: 2px;
    height: 1px;
    background: #fff;
  }
`;

const Scale = styled.div`
  position: relative;
  display: flex;
  flex-direction: column;
  justify-content: space-between;
  padding: ${(p) => (p.$tight ? "3px 0 2px 3px" : "2px 0 1px 3px")};
  line-height: ${(p) => (p.$tight ? "9px" : "12px")};
`;

const ZeroMark = styled.span`
  position: absolute;
  bottom: 0;
  left: 3px;
`;

const TimeScale = styled.div`
  display: flex;
  height: 20px;
  margin-top: -1px;
`;

const Time = styled.time`
  flex: none;
  width: 64px;
  line-height: 12px;
  white-space: nowrap;

  &::before {
    content: "";
    display: block;
    width: 1px;
    height: 3px;
    margin-left: 1px;
    background: #fff;
  }
`;

const Tabs = styled.nav`
  display: flex;
  height: 23px;
  padding: 0 8px 2px 4px;
  color: #777;
  background: linear-gradient(#fff 2px, #222 2px 3px, transparent 3px);
`;

const Tab = styled.button`
  flex: none;
  margin: 6px 0 3px;
  padding: 0 9px 0 10px;
  border-right: 1px solid #888;
  line-height: 12px;
  white-space: nowrap;
  ${(p) =>
    p.$active &&
    css`
      margin: 0;
      padding: 3px 7px 0;
      border-left: 1px solid #111;
      border-right: 2px solid #111;
      border-bottom: 1px solid #111;
      background: #fff;
      color: #000;
    `}
`;

const TabArrows = styled.div`
  display: flex;
  align-items: center;
  gap: 15px;
  margin-left: auto;
`;

const ArrowButton = styled.button`
  display: flex;
`;

const StatusBar = styled.footer`
  display: flex;
  height: 22px;
  line-height: 22px;
  font-size: 11px;
`;

const HelpText = styled.p`
  flex: 1;
  margin: 0;
  padding-left: 3px;
`;

const Cell = styled.div`
  display: flex;
  align-items: center;
  gap: 4px;
  flex: none;
  width: ${(p) => p.$width}px;
  padding-left: 5px;
  border-left: 1px solid ${(p) => (p.$plain ? "transparent" : "#b4b8b8")};
  white-space: nowrap;
`;

const SizeGrip = styled.svg`
  align-self: flex-end;
  margin-left: auto;
`;

export default App;
